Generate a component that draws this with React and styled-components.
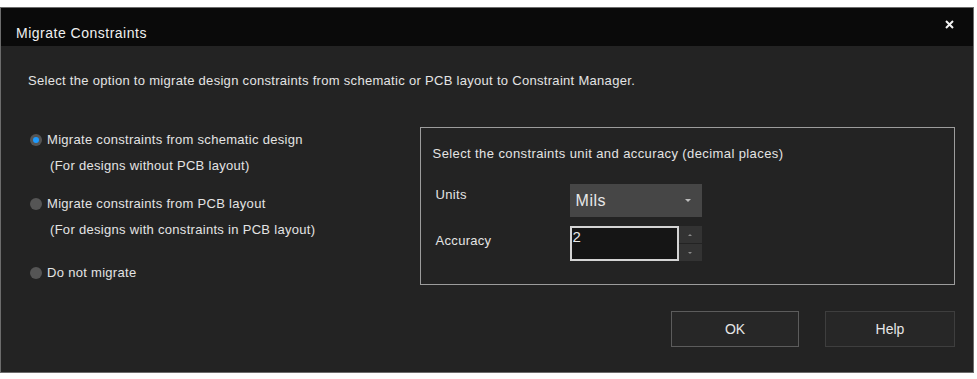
import React, { useState } from 'react';
import styled, { createGlobalStyle } from 'styled-components';

const GlobalStyle = createGlobalStyle`
    html, body {
        margin: 0;
        padding: 0;
        background: #ffffff;
    }
    body {
        font-family: "Liberation Sans", Arial, sans-serif;
        font-size: 13px;
        letter-spacing: 0.3px;
        color: #e4e4e4;
    }
`;

const Window = styled.div`
    box-sizing: border-box;
    margin-top: 7px;
    width: 974px;
    height: 366px;
    border: 1px solid #6c6c6c;
    background: #232323;
    display: flex;
    flex-direction: column;
`;

const TitleBar = styled.header`
    height: 38px;
    background: #0a0a0a;
    display: flex;
    align-items: flex-start;
    justify-content: space-between;
    padding-left: 15px;
    padding-right: 16px;
`;

const Title = styled.span`
    margin-top: 17px;
    font-size: 14px;
    letter-spacing: 0.5px;
    line-height: 16px;
    color: #f0f0f0;
`;

const CloseButton = styled.button`
    margin-top: 8px;
    width: 16px;
    height: 16px;
    padding: 0;
    border: none;
    background: transparent;
    display: flex;
    align-items: center;
    justify-content: center;
    cursor: pointer;
`;

const Body = styled.div`
    flex: 1;
    padding: 27px 18px 0 27px;
    display: flex;
    flex-direction: column;
`;

const Intro = styled.p`
    margin: 0;
    line-height: 16px;
`;

const Main = styled.div`
    margin-top: 38px;
    display: flex;
`;

const Options = styled.div`
    width: 390px;
    padding-top: 5px;
    padding-left: 2px;
    display: flex;
    flex-direction: column;
`;

const Option = styled.label`
    display: flex;
    flex-direction: column;
    margin-top: ${props => props.gap || 0}px;
    cursor: pointer;
`;

const OptionRow = styled.span`
    display: flex;
    align-items: center;
    gap: 5px;
    line-height: 16px;
`;

const RadioDot = styled.span`
    box-sizing: border-box;
    width: 12px;
    height: 12px;
    border-radius: 50%;
    background: #555555;
    display: flex;
    align-items: center;
    justify-content: center;

    &::after {
        content: '';
        width: 6px;
        height: 6px;
        border-radius: 50%;
        background: ${props => props.checked ? '#1e9bff' : 'transparent'};
    }
`;

const Hint = styled.span`
    margin-top: 10px;
    padding-left: 20px;
    line-height: 16px;
`;

const GroupBox = styled.fieldset`
    box-sizing: border-box;
    margin: 0;
    width: 536px;
    height: 158px;
    border: 1px solid #9c9c9c;
    padding: 18px 12px 0 12px;
    display: flex;
    flex-direction: column;
`;

const GroupTitle = styled.div`
    line-height: 16px;
    letter-spacing: 0.4px;
`;

const FieldGrid = styled.div`
    margin-top: 22px;
    padding-left: 3px;
    display: grid;
    grid-template-columns: 134px auto;
    row-gap: 9px;
    align-items: start;
`;

const FieldLabel = styled.span`
    line-height: 16px;
    padding-top: ${props => props.offset}px;
`;

const Dropdown = styled.div`
    width: 132px;
    height: 33px;
    background: #464646;
    display: flex;
    align-items: center;
    justify-content: space-between;
    padding: 0 11px 0 6px;
    box-sizing: border-box;
    font-size: 16px;
    letter-spacing: 0.5px;
    color: #e8e8e8;
    cursor: pointer;
`;

const Caret = styled.span`
    width: 0;
    height: 0;
    border-left: 3px solid transparent;
    border-right: 3px solid transparent;
    border-top: 3px solid #bdbdbd;
`;

const SpinBox = styled.div`
    display: flex;
    height: 35px;
`;

const NumberInput = styled.input`
    box-sizing: border-box;
    width: 109px;
    height: 35px;
    border: 2px solid #d4d4d4;
    background: #151515;
    color: #e8e8e8;
    font-family: "Liberation Sans", Arial, sans-serif;
    font-size: 15px;
    padding: 0 0 14px 1px;
    outline: none;
`;

const SpinButtons = styled.div`
    width: 23px;
    display: flex;
    flex-direction: column;
    gap: 1px;
`;

const SpinArrow = styled.span`
    flex: 1;
    background: #333333;
    display: flex;
    align-items: center;
    justify-content: center;

    &::after {
        content: '';
        border-left: 2px solid transparent;
        border-right: 2px solid transparent;
        ${props => props.down
            ? 'border-top: 2px solid #8a8a8a;'
            : 'border-bottom: 2px solid #8a8a8a;'}
    }
`;

const Footer = styled.div`
    margin-top: 26px;
    display: flex;
    justify-content: flex-end;
    gap: 26px;
`;

const Button = styled.button`
    box-sizing: border-box;
    width: ${props => props.width}px;
    height: 36px;
    background: #272727;
    border: 1px solid ${props => props.primary ? '#5c5c5c' : '#3e3e3e'};
    color: #e6e6e6;
    font-family: "Liberation Sans", Arial, sans-serif;
    font-size: 14px;
    cursor: pointer;
`;

const options = [
    { label: 'Migrate constraints from schematic design', hint: '(For designs without PCB layout)', gap: 0 },
    { label: 'Migrate constraints from PCB layout', hint: '(For designs with constraints in PCB layout)', gap: 22 },
    { label: 'Do not migrate', gap: 27 },
];

function App() {
    const [selected, setSelected] = useState(0);
    const [accuracy, setAccuracy] = useState('2');

    return (
        <>
            <GlobalStyle />
            <Window>
                <TitleBar>
                    <Title>Migrate Constraints</Title>
                    <CloseButton title="Close">
                        <svg width="9" height="9" viewBox="0 0 9 9">
                            <path d="M1 1 L8 8 M8 1 L1 8" stroke="#f2f2f2" strokeWidth="2" />
                        </svg>
                    </CloseButton>
                </TitleBar>
                <Body>
                    <Intro>
                        Select the option to migrate design constraints from schematic or PCB layout to Constraint Manager.
                    </Intro>
                    <Main>
                        <Options>
                            {options.map((option, key) => (
                                <Option key={key} gap={option.gap} onClick={() => setSelected(key)}>
                                    <OptionRow>
                                        <RadioDot checked={selected === key} />
                                        {option.label}
                                    </OptionRow>
                                    {option.hint && <Hint>{option.hint}</Hint>}
                                </Option>
                            ))}
                        </Options>
                        <GroupBox>
                            <GroupTitle>Select the constraints unit and accuracy (decimal places)</GroupTitle>
                            <FieldGrid>
                                <FieldLabel offset={3}>Units</FieldLabel>
                                <Dropdown>
                                    Mils
                                    <Caret />
                                </Dropdown>
                                <FieldLabel offset={7}>Accuracy</FieldLabel>
                                <SpinBox>
                                    <NumberInput value={accuracy} onChange={e => setAccuracy(e.target.value)} />
                                    <SpinButtons>
                                        <SpinArrow />
                                        <SpinArrow down />
                                    </SpinButtons>
                                </SpinBox>
                            </FieldGrid>
                        </GroupBox>
                    </Main>
                    <Footer>
                        <Button primary width={128}>OK</Button>
                        <Button width={130}>Help</Button>
                    </Footer>
                </Body>
            </Window>
        </>
    );
}

export default App;
